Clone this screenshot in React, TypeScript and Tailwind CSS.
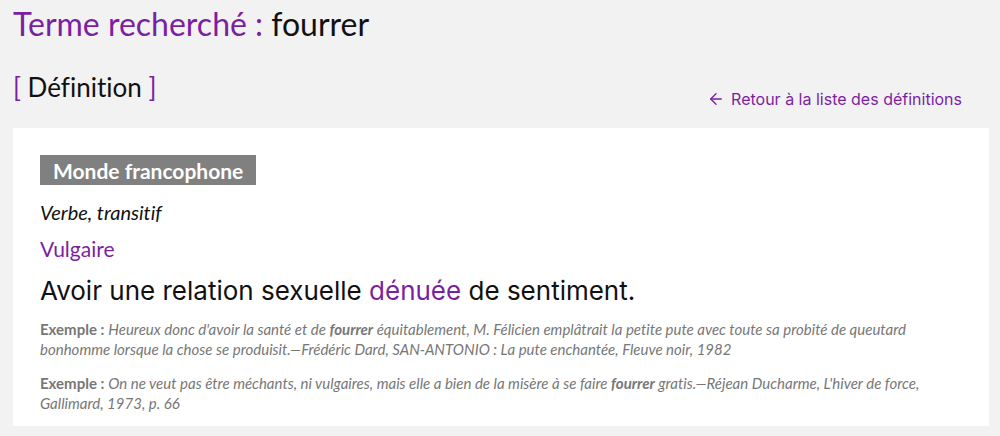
import React from 'react';
import { ArrowLeft } from 'lucide-react';

const lato = "font-['Lato','Liberation_Sans',sans-serif]";
const alt = "font-['Inter','Open_Sans',sans-serif]";

const App: React.FC = () => {
  return (
    <div className={`min-h-[436px] w-full bg-[#f2f2f2] pb-[10px] [font-variant-ligatures:none] ${lato}`}>
      <h1 className="pl-[13px] text-[32px] leading-[48px] text-[#111]">
        <span className="text-[#7b1fa2]">Terme recherché :</span> fourrer
      </h1>

      <div className="mt-[21px] flex items-start justify-between pl-[13px] pr-[38px]">
        <h2 className="text-[26px] leading-[36px] text-[#111]">
          <span className="text-[#7b1fa2]">[</span> Définition <span className="text-[#7b1fa2]">]</span>
        </h2>
        <a href="#" className={`mt-[18px] flex items-center gap-[6px] text-[16px] leading-[24px] text-[#7b1fa2] ${alt}`}>
          <ArrowLeft size={18} strokeWidth={1.8} />
          Retour à la liste des définitions
        </a>
      </div>

      <div className="mt-[17px] ml-[13px] mr-[11px] bg-white pt-[27px] pb-[13px] pl-[27px] pr-[40px]">
        <div className="inline-block h-[30px] bg-[#808080] px-[13px] pt-[2px] text-[21px] font-bold leading-[28px] text-white">
          Monde francophone
        </div>
        <p className="mt-[13px] text-[20px] italic leading-[28px] text-[#111]">Verbe, transitif</p>
        <p className="mt-[9px] text-[21px] leading-[28px] text-[#7b1fa2]">Vulgaire</p>
        <p className={`mt-[12px] text-[26px] leading-[32px] text-[#111] ${alt}`}>
          Avoir une relation sexuelle <span className="text-[#7b1fa2]">dénuée</span> de sentiment.
        </p>
        <p className="mt-[12px] text-[15px] leading-[20px] text-[#777]">
          <b>Exemple :</b>{' '}
          <i>
            Heureux donc d'avoir la santé et de <b>fourrer</b> équitablement, M. Félicien emplâtrait la petite pute avec toute sa probité de queutard bonhomme lorsque la chose se produisit.—Frédéric Dard, SAN-ANTONIO : La pute enchantée, Fleuve noir, 1982
          </i>
        </p>
        <p className="mt-[14px] text-[15px] leading-[20px] text-[#777]">
          <b>Exemple :</b>{' '}
          <i>
            On ne veut pas être méchants, ni vulgaires, mais elle a bien de la misère à se faire <b>fourrer</b> gratis.—Réjean Ducharme, L'hiver de force, Gallimard, 1973, p. 66
          </i>
        </p>
      </div>
    </div>
  );
};

export default App;
